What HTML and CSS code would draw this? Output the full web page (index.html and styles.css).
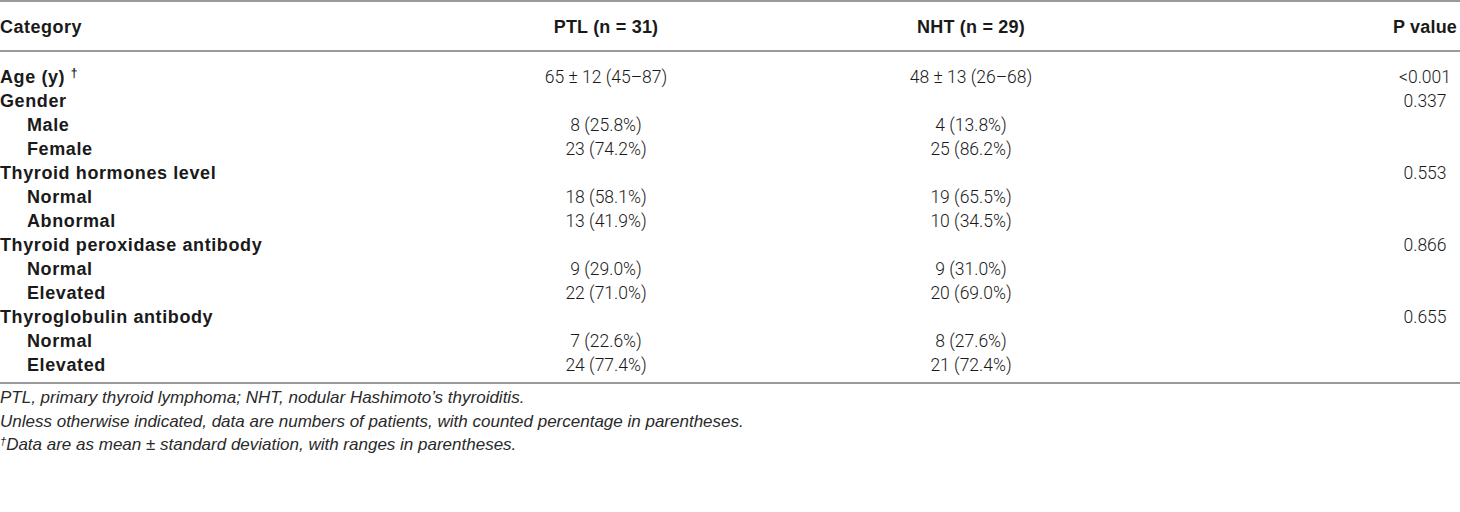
FILE: index.html
```html
<!DOCTYPE html>
<html lang="en">
<head>
    <meta charset="UTF-8">
    <title>Table 1</title>
    <link rel="stylesheet" href="styles.css">
</head>
<body>
    <div class="table-wrap">
        <table class="data-table">
            <colgroup>
                <col class="col-cat">
                <col class="col-ptl">
                <col class="col-nht">
                <col class="col-p">
            </colgroup>
            <thead>
                <tr>
                    <th class="cat">Category</th>
                    <th>PTL (n = 31)</th>
                    <th>NHT (n = 29)</th>
                    <th class="pval">P value</th>
                </tr>
            </thead>
            <tbody>
                <!-- first and last rows carry the extra spacing -->
                <tr class="first">
                    <td class="cat">Age (y) <sup>†</sup></td>
                    <td>65 ± 12 (45–87)</td>
                    <td>48 ± 13 (26–68)</td>
                    <td class="pval">&lt;0.001</td>
                </tr>
                <tr>
                    <td class="cat">Gender</td>
                    <td></td>
                    <td></td>
                    <td class="pval">0.337</td>
                </tr>
                <tr>
                    <td class="cat sub">Male</td>
                    <td>8 (25.8%)</td>
                    <td>4 (13.8%)</td>
                    <td class="pval"></td>
                </tr>
                <tr>
                    <td class="cat sub">Female</td>
                    <td>23 (74.2%)</td>
                    <td>25 (86.2%)</td>
                    <td class="pval"></td>
                </tr>
                <tr>
                    <td class="cat">Thyroid hormones level</td>
                    <td></td>
                    <td></td>
                    <td class="pval">0.553</td>
                </tr>
                <tr>
                    <td class="cat sub">Normal</td>
                    <td>18 (58.1%)</td>
                    <td>19 (65.5%)</td>
                    <td class="pval"></td>
                </tr>
                <tr>
                    <td class="cat sub">Abnormal</td>
                    <td>13 (41.9%)</td>
                    <td>10 (34.5%)</td>
                    <td class="pval"></td>
                </tr>
                <tr>
                    <td class="cat">Thyroid peroxidase antibody</td>
                    <td></td>
                    <td></td>
                    <td class="pval">0.866</td>
                </tr>
                <tr>
                    <td class="cat sub">Normal</td>
                    <td>9 (29.0%)</td>
                    <td>9 (31.0%)</td>
                    <td class="pval"></td>
                </tr>
                <tr>
                    <td class="cat sub">Elevated</td>
                    <td>22 (71.0%)</td>
                    <td>20 (69.0%)</td>
                    <td class="pval"></td>
                </tr>
                <tr>
                    <td class="cat">Thyroglobulin antibody</td>
                    <td></td>
                    <td></td>
                    <td class="pval">0.655</td>
                </tr>
                <tr>
                    <td class="cat sub">Normal</td>
                    <td>7 (22.6%)</td>
                    <td>8 (27.6%)</td>
                    <td class="pval"></td>
                </tr>
                <tr class="last">
                    <td class="cat sub">Elevated</td>
                    <td>24 (77.4%)</td>
                    <td>21 (72.4%)</td>
                    <td class="pval"></td>
                </tr>
            </tbody>
        </table>
        <div class="notes">
            <p>PTL, primary thyroid lymphoma; NHT, nodular Hashimoto’s thyroiditis.</p>
            <p>Unless otherwise indicated, data are numbers of patients, with counted percentage in parentheses.</p>
            <p><sup>†</sup>Data are as mean ± standard deviation, with ranges in parentheses.</p>
        </div>
    </div>
</body>
</html>
```

FILE: styles.css
```css
body {
    margin: 0;
    background: #fff;
    color: #1a1a1a;
    font-family: Roboto, "Liberation Sans", Arial, sans-serif;
}

.table-wrap {
    width: 1460px;
}

.data-table {
    width: 100%;
    border-collapse: collapse;
    table-layout: fixed;
    border-top: 2px solid #9a9a9a;
    border-bottom: 2px solid #9a9a9a;
}

.col-cat {
    width: 420px;
}

.col-ptl {
    width: 372px;
}

.col-nht {
    width: 358px;
}

.data-table th {
    height: 45px;
    padding: 3px 0 0;
    font-family: "Liberation Sans", Arial, sans-serif;
    font-size: 18px;
    font-weight: bold;
    letter-spacing: 0.2px;
    text-align: center;
    border-bottom: 2px solid #9a9a9a;
}

.data-table td {
    height: 24px;
    padding: 0;
    font-size: 17.5px;
    font-weight: 300;
    text-align: center;
    white-space: nowrap;
}

.data-table .cat {
    text-align: left;
    font-family: "Liberation Sans", Arial, sans-serif;
    font-size: 18px;
    font-weight: bold;
    letter-spacing: 0.6px;
}

.data-table th.cat {
    letter-spacing: 0.5px;
}

.data-table .sub {
    padding-left: 27px;
}

/* p values sit centred in a narrow band at the right edge */
.data-table .pval {
    text-align: center;
    padding-left: 240px;
}

.data-table sup {
    font-size: 12px;
    vertical-align: 6px;
    line-height: 0;
}

.first td {
    padding-top: 13px;
}

.last td {
    padding-bottom: 5px;
}

.notes {
    padding-top: 2px;
}

.notes p {
    margin: 0;
    line-height: 23.5px;
    font-family: "Liberation Sans", Arial, sans-serif;
    font-size: 17px;
    font-style: italic;
    color: #2a2a2a;
}

.notes sup {
    font-size: 11px;
    vertical-align: 5px;
    line-height: 0;
}
```
